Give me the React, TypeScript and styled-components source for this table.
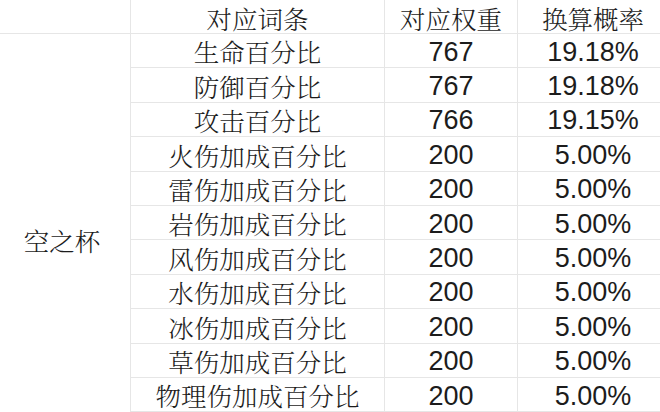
import React from "react";
import styled, { createGlobalStyle } from "styled-components";

const Global = createGlobalStyle`
  html, body { margin: 0; padding: 0; background: #ffffff; overflow: hidden; }
  body { width: 660px; height: 412px; }
`;

const Sheet = styled.div<{ $rows: number }>`
  display: grid;
  grid-template-columns: 131px 254px 133px 142px;
  grid-template-rows: 34px repeat(${(p) => p.$rows}, 34.4px);
  width: 660px;
  background: #ffffff;
  color: #1c1c1c;
`;

const Cell = styled.div<{ $num?: boolean; $last?: boolean; $col?: number; $head?: boolean }>`
  grid-column: ${(p) => (p.$col ? p.$col : "auto")};
  display: flex;
  align-items: center;
  justify-content: center;
  padding-top: ${(p) => (p.$head ? "5px" : "3px")};
  padding-left: ${(p) => (p.$last ? "8px" : "0")};
  box-sizing: border-box;
  line-height: 1;
  border-bottom: 1px solid #e6e6e6;
  border-right: ${(p) => (p.$last ? "none" : "1px solid #e6e6e6")};
  font-family: ${(p) =>
    p.$num
      ? '"Liberation Sans", Arial, sans-serif'
      : '"Noto Serif CJK SC", "Noto Sans CJK SC", serif'};
  font-size: ${(p) => (p.$num ? "27px" : "25.5px")};
  font-weight: ${(p) => (p.$num ? 400 : 300)};
  white-space: nowrap;
`;

const GroupCell = styled.div<{ $span: number }>`
  grid-column: 1;
  grid-row: 2 / span ${(p) => p.$span};
  display: flex;
  align-items: center;
  justify-content: center;
  padding: 36px 6px 0 0;
  box-sizing: border-box;
  line-height: 1;
  border-right: 1px solid #e6e6e6;
  font-family: "Noto Serif CJK SC", "Noto Sans CJK SC", serif;
  font-size: 25.5px;
  font-weight: 300;
`;

const rows: [string, number][] = [
  ["生命百分比", 767],
  ["防御百分比", 767],
  ["攻击百分比", 766],
  ["火伤加成百分比", 200],
  ["雷伤加成百分比", 200],
  ["岩伤加成百分比", 200],
  ["风伤加成百分比", 200],
  ["水伤加成百分比", 200],
  ["冰伤加成百分比", 200],
  ["草伤加成百分比", 200],
  ["物理伤加成百分比", 200],
];

const total = 4000;

export default function App() {
  return (
    <>
      <Global />
      <Sheet $rows={rows.length}>
        <Cell $head />
        <Cell $head>对应词条</Cell>
        <Cell $head>对应权重</Cell>
        <Cell $head $last>换算概率</Cell>
        <GroupCell $span={rows.length}>空之杯</GroupCell>
        {rows.map(([name, w], i) => (
          <React.Fragment key={i}>
            <Cell $col={2}>{name}</Cell>
            <Cell $num>{w}</Cell>
            <Cell $num $last>
              {((w / total) * 100).toFixed(2)}%
            </Cell>
          </React.Fragment>
        ))}
      </Sheet>
    </>
  );
}
